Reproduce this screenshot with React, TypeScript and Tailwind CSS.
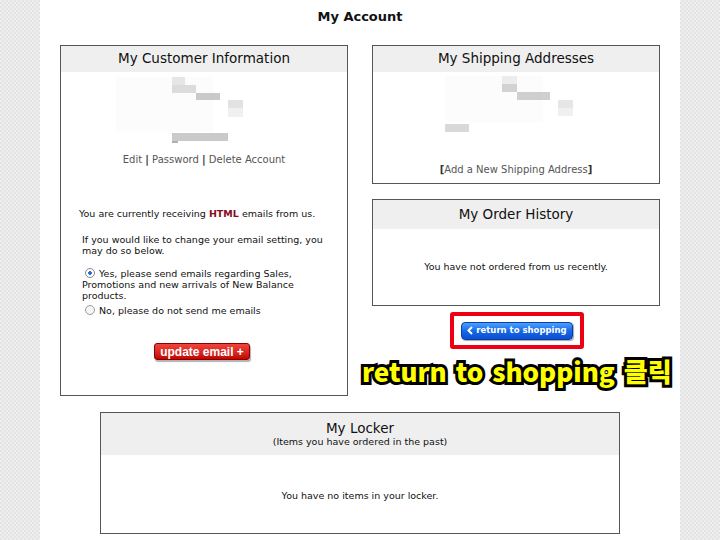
import React from 'react';

const verdana = "font-['DejaVu_Sans','Verdana',sans-serif]";

function BoxHeader({ title, sub, tall }: { title: string; sub?: string; tall?: string }) {
  return (
    <div className={`flex flex-col items-center justify-center bg-[#efefef] ${tall ?? 'h-[26px]'}`}>
      <div className="text-[13.5px] leading-none text-[#111]">{title}</div>
      {sub && <div className="mt-[2px] text-[9.5px] leading-none text-[#111]">{sub}</div>}
    </div>
  );
}

// pixelated blur of personal info
function Blur({ blocks, w, h }: { blocks: [number, number, number, number, string][]; w: number; h: number }) {
  return (
    <svg width={w} height={h} viewBox={`0 0 ${w} ${h}`} className="block">
      <rect x="0" y="0" width={w * 0.75} height={h * 0.8} fill="#fcfcfc" />
      {blocks.map(([x, y, bw, bh, c], i) => (
        <rect key={i} x={x} y={y} width={bw} height={bh} fill={c} />
      ))}
    </svg>
  );
}

export default function App() {
  return (
    <div className={`flex h-[540px] w-[720px] overflow-hidden ${verdana}`}>
      <div className="w-[40px] bg-[#e9e9e9] bg-[repeating-conic-gradient(#e4e4e4_0_25%,#eeeeee_0_50%)] bg-[length:4px_4px]" />

      <div className="flex w-[640px] flex-col bg-white">
        <h1 className="pt-[10px] text-center text-[13px] font-bold leading-[14px] text-[#111]">My Account</h1>

        <div className="mt-[21px] flex gap-[24px] px-[20px]">
          {/* left column */}
          <div className="flex h-[351px] w-[288px] flex-col border border-[#555]">
            <BoxHeader title="My Customer Information" />
            <div className="mt-[5px] flex pl-[55px]">
              <Blur
                w={130}
                h={68}
                blocks={[
                  [56, 0, 13, 8, '#e6e6e6'],
                  [56, 8, 24, 8, '#dcdcdc'],
                  [80, 16, 24, 7, '#c9c9c9'],
                  [112, 23, 15, 8, '#e2e2e2'],
                  [112, 31, 15, 9, '#f0f0f0'],
                  [56, 56, 56, 8, '#cacaca'],
                  [56, 64, 6, 2, '#b0b0b0'],
                ]}
              />
            </div>
            <div className="mt-[7px] text-center text-[10px] text-[#555]">
              Edit <b className="text-[#333]">|</b> Password <b className="text-[#333]">|</b> Delete Account
            </div>

            <div className="mt-[41px] pl-[18px] text-[9.5px] leading-[11px] text-[#111]">
              You are currently receiving <b className="text-[#8a0a1e]">HTML</b> emails from us.
            </div>
            <div className="mt-[15px] pl-[21px] pr-[20px] text-[9.5px] leading-[11px] text-[#111]">
              If you would like to change your email setting, you may do so below.
            </div>
            <div className="mt-[11px] pl-[21px] pr-[30px] text-[9.5px] leading-[11px] text-[#111]">
              <div>
                <span className="relative top-[1px] mr-[4px] ml-[3px] inline-block h-[10px] w-[10px] rounded-full border border-[#888] bg-[radial-gradient(circle,#2a6fd0_0_28%,#ffffff_35%)]" />
                Yes, please send emails regarding Sales, Promotions and new arrivals of New Balance products.
              </div>
              <div className="mt-[3px]">
                <span className="relative top-[1px] mr-[4px] ml-[3px] inline-block h-[10px] w-[10px] rounded-full border border-[#999] bg-[#f6f6f6]" />
                No, please do not send me emails
              </div>
            </div>
            <div className="mt-[27px] flex justify-center pr-[4px]">
              <button className="h-[17px] rounded-[3px] border border-[#8a0000] bg-gradient-to-b from-[#f0433a] to-[#c40000] px-[5px] font-['Liberation_Sans',Arial,sans-serif] text-[12px] font-bold leading-[14px] text-white shadow-[1px_2px_1px_rgba(0,0,0,0.3)]">
                update email +
              </button>
            </div>
          </div>

          {/* right column */}
          <div className="flex w-[288px] flex-col">
            <div className="flex h-[139px] flex-col border border-[#555]">
              <BoxHeader title="My Shipping Addresses" />
              <div className="mt-[4px] flex pl-[72px]">
                <Blur
                  w={130}
                  h={58}
                  blocks={[
                    [57, 0, 15, 8, '#ececec'],
                    [57, 8, 15, 8, '#d2d2d2'],
                    [72, 16, 33, 8, '#cfcfcf'],
                    [113, 24, 15, 8, '#e6e6e6'],
                    [113, 32, 15, 8, '#f0f0f0'],
                    [0, 48, 24, 8, '#d9d9d9'],
                  ]}
                />
              </div>
              <div className="mt-[28px] text-center text-[10px] text-[#555]">
                <b className="text-[#333]">[</b>Add a New Shipping Address<b className="text-[#333]">]</b>
              </div>
            </div>

            <div className="mt-[15px] flex h-[107px] flex-col border border-[#555]">
              <BoxHeader title="My Order History" tall="h-[29px]" />
              <div className="mt-[31px] text-center text-[9.5px] text-[#111]">You have not ordered from us recently.</div>
            </div>

            <div className="mt-[6px] flex justify-center pl-[2px]">
              <div className="flex h-[37px] w-[134px] items-center justify-center rounded-[3px] border-[4px] border-[#ec0012]">
                <button className="flex h-[18px] items-center gap-[3px] rounded-[4px] border border-[#0a3ea8] bg-gradient-to-b from-[#4aa0ff] via-[#1668e8] to-[#0a4fcf] px-[5px] text-[8.5px] font-bold leading-none text-white shadow-[1px_1px_1px_rgba(0,0,0,0.35)]">
                  <svg width="6" height="9" viewBox="0 0 6 9">
                    <path d="M5 1 L1.5 4.5 L5 8" stroke="white" strokeWidth="2" fill="none" />
                  </svg>
                  return to shopping
                </button>
              </div>
            </div>

            <div className="mt-[6px] ml-[-10px] whitespace-nowrap font-['Noto_Sans_CJK_KR',sans-serif] text-[26px] font-black leading-[32px] text-[#ffff00] [paint-order:stroke_fill] [-webkit-text-stroke:6px_#000] [word-spacing:3px]">
              return to shopping 클릭
            </div>
          </div>
        </div>

        <div className="mt-[16px] flex justify-center">
          <div className="flex h-[122px] w-[520px] flex-col border border-[#555]">
            <BoxHeader title="My Locker" sub="(Items you have ordered in the past)" tall="h-[42px]" />
            <div className="mt-[34px] text-center text-[9.5px] text-[#111]">You have no items in your locker.</div>
          </div>
        </div>
      </div>

      <div className="w-[40px] bg-[#e9e9e9] bg-[repeating-conic-gradient(#e4e4e4_0_25%,#eeeeee_0_50%)] bg-[length:4px_4px]" />
    </div>
  );
}
